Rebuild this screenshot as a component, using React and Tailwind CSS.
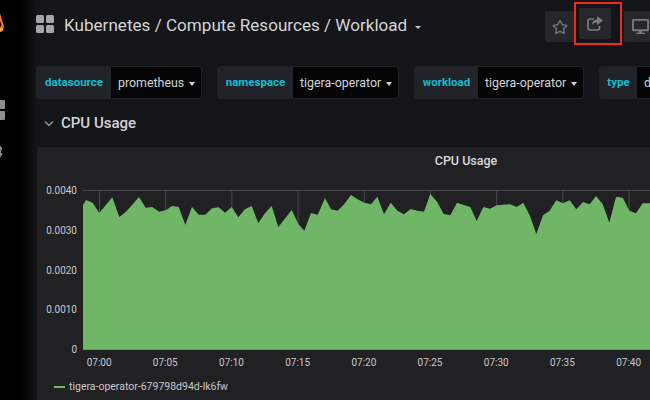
import { FaCog, FaDesktop, FaRegStar } from "react-icons/fa";

const plot = [
  [83, 205], [86, 200], [92.7, 202.7], [99.3, 213], [112.3, 197.3], [119.3, 217], [126, 211.7], [139, 197],
  [145.7, 207.7], [152.3, 207], [159, 211.7], [165.7, 210.3], [172, 206], [178.7, 207], [185.3, 224.7], [192, 207],
  [198.7, 214.7], [205.3, 214.7], [212, 208.3], [218.7, 207.3], [225, 212.7], [231.7, 207], [238.3, 217.3], [245, 209.3],
  [251.7, 206], [258.3, 223], [265, 213.3], [271.7, 206], [278.3, 227], [291.7, 210], [298.3, 224], [304.3, 230.7],
  [311, 213], [317.7, 214.7], [325, 198], [331, 209.3], [337.7, 210.7], [344.3, 204], [351, 195], [357.7, 199.3],
  [364.3, 202.7], [371, 204.3], [377.3, 196.7], [384, 214.3], [390.7, 202.7], [397.3, 210.7], [404, 214.3], [410.7, 209],
  [417.3, 210.7], [424, 211.7], [430.3, 194], [437, 201.7], [443.7, 214], [450.3, 215.3], [457, 202.7], [463.7, 205],
  [470.3, 207], [476.7, 221], [483.3, 207], [490, 208.7], [496.7, 205.3], [510, 204.3], [516.7, 207], [523.3, 202.7],
  [530, 216], [536.3, 234], [543, 215.3], [549.7, 210.7], [556.3, 200.3], [563, 203.3], [569.7, 200.3], [576.3, 209.3],
  [583, 202], [589.7, 204.3], [596, 196], [602.7, 204.3], [609.3, 222.7], [616, 197], [622.7, 197.7], [629.3, 210.7],
  [636, 213.3], [642.7, 203.3], [650, 203.3],
];

// coordinates above are page pixels, the svg starts at x=83 y=190
const area =
  "M0 159 " + plot.map(([x, y]) => `L${(x - 83).toFixed(1)} ${(y - 190).toFixed(1)}`).join(" ") + " L567 159 Z";

const times = ["07:00", "07:05", "07:10", "07:15", "07:20", "07:25", "07:30", "07:35", "07:40"];
const values = ["0.0040", "0.0030", "0.0020", "0.0010", "0"];

const variables = [
  { name: "datasource", value: "prometheus", nameW: "w-[74px]", valueW: "w-[90px]" },
  { name: "namespace", value: "tigera-operator", nameW: "w-[75px]", valueW: "w-[105px]" },
  { name: "workload", value: "tigera-operator", nameW: "w-[63px]", valueW: "w-[105px]" },
  { name: "type", value: "deployment", nameW: "w-[37px]", valueW: "w-[100px]" },
];

function Variable({ name, value, nameW, valueW }) {
  return (
    <div className="flex h-[33px] shrink-0 rounded-[3px] border border-[#202226] bg-[#212329]">
      <div className={`${nameW} flex items-center justify-center pt-[1px] text-[11.5px] font-bold text-[#12bdd2]`}>{name}</div>
      <div className={`${valueW} flex items-center justify-between whitespace-nowrap rounded-r-[3px] bg-[#050506] pl-[7px] pr-[6px] pt-[2px] text-[12.4px] text-[#d3d4d5]`}>
        <span>{value}</span>
        <span className="h-0 w-0 border-x-[3.5px] border-t-[4px] border-x-transparent border-t-[#d3d4d5]" />
      </div>
    </div>
  );
}

function ShareIcon() {
  return (
    <svg width="16" height="15" viewBox="0 0 16 15">
      <path d="M7 3H3.2A2.2 2.2 0 0 0 1 5.2v6.6A2.2 2.2 0 0 0 3.2 14h7.1a2.2 2.2 0 0 0 2.2-2.2V10" fill="none" stroke="currentColor" strokeWidth="1.7" />
      <path d="M10 0l6 4.6L10 9.2V6.6c-2.6 0-4.2.8-5 3 0-4 1.800-6 5-6.400z" fill="currentColor" />
    </svg>
  );
}

function Sidebar() {
  return (
    <div className="flex w-[37px] shrink-0 bg-[linear-gradient(90deg,#000_0,#000_21px,#141518_37px)]">
      <div className="-ml-[16px] flex w-[21px] flex-col items-center">
        <svg className="mt-[13px]" width="21" height="20" viewBox="0 0 21 20">
          <path d="M16 0l2 7 2 6-1 5-3 1z" fill="#f4761c" />
          <path d="M16 8l1.500 4-1.500 3z" fill="#000" />
          <path d="M16 15l2-1 1 3-3 2z" fill="#fba51f" />
        </svg>
        <div className="mt-[67px] grid grid-cols-2 gap-[2px]">
          <span className="h-[9px] w-[9px] rounded-[1px] bg-[#8e8e8e]" />
          <span className="h-[9px] w-[9px] rounded-[1px] bg-[#8e8e8e]" />
          <span className="h-[9px] w-[9px] rounded-[1px] bg-[#8e8e8e]" />
          <span className="h-[9px] w-[9px] rounded-[1px] bg-[#8e8e8e]" />
        </div>
        <FaCog className="mt-[23px] text-[#8e8e8e]" size={17} />
      </div>
    </div>
  );
}

function Chart() {
  return (
    <div className="flex h-[253px] w-[858px] shrink-0 flex-col rounded-[2px] bg-[#212124] text-[#c8c9ca]">
      <div className="flex h-[21px] shrink-0 items-end justify-center text-[12.5px] font-medium leading-[15px] text-[#d8d9da]">CPU Usage</div>
      <div className="flex pt-[22px]">
        <div className="mt-[1px] flex h-[159px] w-[46px] shrink-0 flex-col justify-between">
          {values.map((v) => (
            <div key={v} className="h-0 pr-[6px] text-right text-[10px] leading-[0]">{v}</div>
          ))}
        </div>
        <svg className="shrink-0" width="567" height="160" viewBox="0 0 567 160">
          <line x1="0" y1="0.5" x2="567" y2="0.5" stroke="#4a4a4d" />
          {times.map((t, i) => (
            <line key={t} x1={16.5 + i * 66.2} y1="0" x2={16.5 + i * 66.2} y2="40" stroke="#4a4a4d" />
          ))}
          <path d={area} fill="#6fb767" />
          <line x1="0" y1="159.5" x2="567" y2="159.5" stroke="#5c9c55" />
        </svg>
      </div>
      <div className="ml-[29px] mt-[6px] flex text-[10px] leading-[14px]">
        {times.map((t) => (
          <div key={t} className="w-[66.2px] shrink-0 text-center">{t}</div>
        ))}
      </div>
      <div className="ml-[17px] mt-[10px] flex items-center gap-[4px] text-[10.5px] leading-[14px] text-[#c8c9ca]">
        <span className="h-[2px] w-[11px] bg-[#6fb767]" />
        <span>tigera-operator-679798d94d-lk6fw</span>
      </div>
    </div>
  );
}

export default function App() {
  return (
    <div className="flex h-[400px] w-[650px] overflow-hidden bg-[#141518] font-['Roboto',sans-serif]">
      <Sidebar />
      <div className="min-w-0 flex-1">
        <div className="-ml-[1px] flex h-[48px] items-start">
          <div className="mt-[15px] grid shrink-0 grid-cols-2 gap-[2px]">
            <span className="h-[8px] w-[8px] rounded-[1.5px] bg-[#a5a6a7]" />
            <span className="h-[8px] w-[8px] rounded-[1.5px] bg-[#a5a6a7]" />
            <span className="h-[8px] w-[8px] rounded-[1.5px] bg-[#a5a6a7]" />
            <span className="h-[8px] w-[8px] rounded-[1.5px] bg-[#a5a6a7]" />
          </div>
          <div className="ml-[10px] mt-[14px] flex shrink-0 items-center text-[17.1px] leading-[22px] text-[#d3d4d5]">
            <span>Kubernetes / Compute Resources / Workload</span>
            <span className="ml-[8px] mt-[5px] h-0 w-0 border-x-[3px] border-t-[3px] border-x-transparent border-t-[#c8c9ca]" />
          </div>
          <div className="ml-[124px] mt-[8px] flex shrink-0 items-center">
            <div className="flex h-[31px] w-[29px] items-center justify-center rounded-l-[2px] bg-[#26272a] text-[#77787a]">
              <FaRegStar size={16} />
            </div>
            <div className="mt-[-6px] flex h-[43px] w-[48px] items-center justify-start border-[2px] border-[#f5291c] pl-[3px]">
              <div className="flex h-[31px] w-[32px] items-center justify-center rounded-[2px] bg-[#26272a] text-[#7b7c7e]">
                <ShareIcon />
              </div>
            </div>
            <div className="ml-[2px] flex h-[31px] w-[32px] items-center justify-center rounded-[2px] bg-[#26272a] text-[#77787a]">
              <FaDesktop size={17} />
            </div>
          </div>
        </div>
        <div className="-ml-[1px] mt-[18px] flex gap-[15px]">
          {variables.map((v) => (
            <Variable key={v.name} {...v} />
          ))}
        </div>
        <div className="mt-[12px] flex h-[24px] items-center">
          <svg className="ml-[7px]" width="10" height="7" viewBox="0 0 10 7" fill="none" stroke="#8e8f91" strokeWidth="1.5">
            <path d="M1 1.5l4 4 4-4" />
          </svg>
          <span className="ml-[7px] text-[15px] font-medium text-[#d3d4d5]">CPU Usage</span>
        </div>
        <div className="mt-[12px]">
          <Chart />
        </div>
      </div>
    </div>
  );
}
